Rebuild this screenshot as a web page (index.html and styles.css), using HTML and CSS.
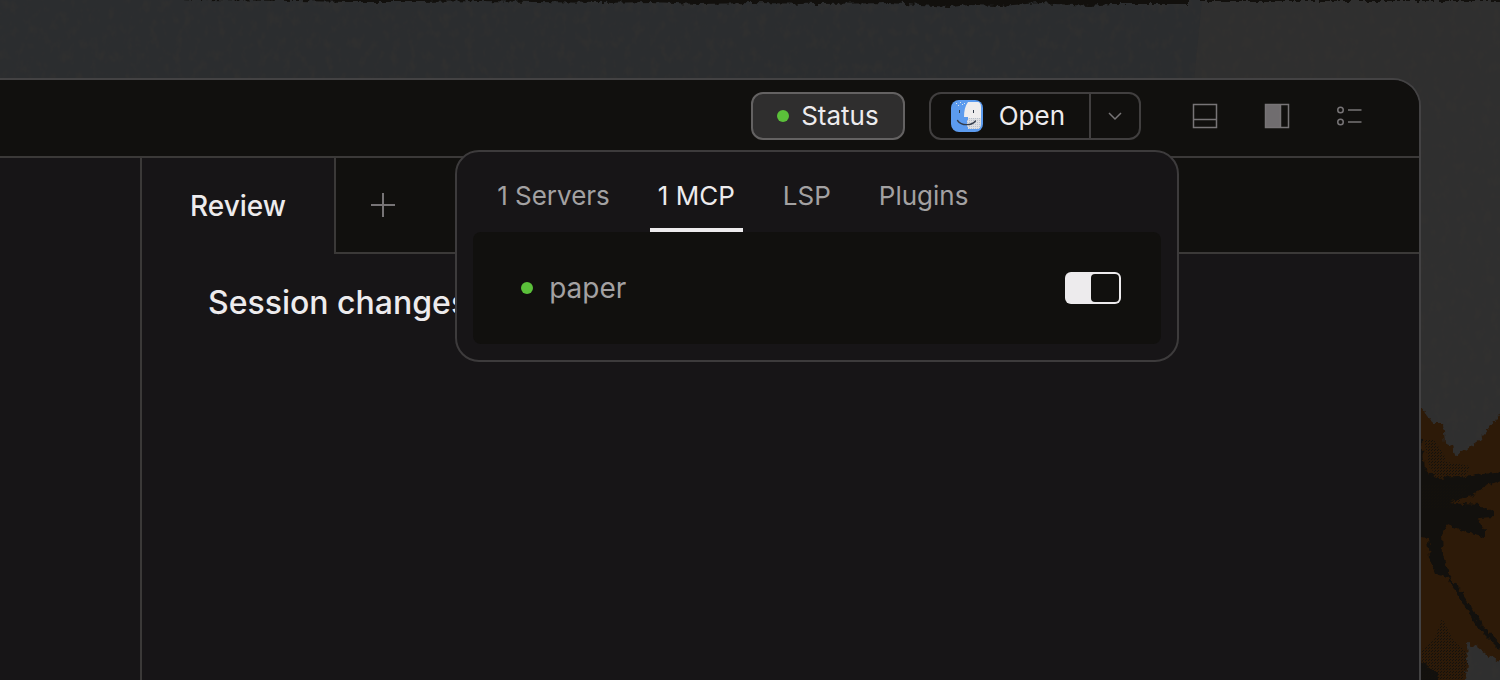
FILE: index.html
```html
<!DOCTYPE html>
<html lang="en">
<head>
  <meta charset="UTF-8" />
  <meta name="viewport" content="width=device-width, initial-scale=1.0"/>
  <title>Session</title>
  <link rel="stylesheet" href="styles.css">
</head>
<body>
  <!-- Desktop wallpaper -->
  <svg class="wallpaper" viewBox="0 0 1500 680" preserveAspectRatio="xMaxYMin slice" aria-hidden="true">
    <defs>
      <filter id="rough" x="-5%" y="-50%" width="110%" height="200%" color-interpolation-filters="sRGB">
        <feTurbulence type="fractalNoise" baseFrequency="0.2" numOctaves="2" seed="4"/>
        <feDisplacementMap in="SourceGraphic" scale="7" xChannelSelector="R" yChannelSelector="G"/>
      </filter>
      <filter id="grain" x="0" y="0" width="100%" height="100%" color-interpolation-filters="sRGB">
        <feTurbulence type="fractalNoise" baseFrequency="0.12 0.08" numOctaves="3" seed="8"/>
        <feColorMatrix values="0 0 0 0 0.21  0 0 0 0 0.2  0 0 0 0 0.19  3 0 0 0 -1.4"/>
      </filter>
      <pattern id="dither" width="3" height="3" patternUnits="userSpaceOnUse">
        <rect width="1" height="1" fill="#14110c"/>
        <rect x="1" y="2" width="1" height="1" fill="#14110c"/>
      </pattern>
    </defs>
    <rect width="1500" height="680" fill="#2b2d2f"/>
    <path d="M1202 0H1500V680H1400V80H1194z" fill="#2f2f2f"/>
    <rect width="1500" height="680" filter="url(#grain)" opacity=".4"/>
    <g filter="url(#rough)" fill="#12100d">
      <path d="M90-6H1189V4H1110L1090 6 1040 3 1000 6 970 5 950 7 890 3 820 4 750 3 700 4 650 2 600 3 540 2 480 1 420 2 350 2 300 1 200 0z"/>
      <path d="M1200-4H1500V1H1200z"/>
    </g>
    <g filter="url(#rough)">
      <path fill="#2d1a08" d="M1410 402L1421 407 1433 423 1443 423 1445 443 1452 447 1455 455 1463 452 1480 440 1492 425 1506 405V662L1490 657 1477 647 1467 643 1468 663 1463 690H1410z"/>
      <path fill="#12100d" d="M1410 440H1422L1425 470 1436 478 1460 477 1483 473 1506 471V480L1488 484 1475 494 1455 500 1447 503 1480 505 1494 512V517L1478 518 1485 530V538L1465 532 1448 524 1442 535 1443 555 1449 575 1470 605 1485 628 1506 650 1500 650 1480 630 1462 602 1448 578 1436 574 1430 558 1428 538 1410 535z"/>
      <path fill="#12100d" d="M1410 655L1426 664 1438 676V690H1410z"/>
    </g>
    <path fill="url(#dither)" d="M1421 650L1434 640 1442 618 1453 640 1465 650 1468 663 1463 680H1421zM1421 485H1470L1455 508H1421zM1436 460L1470 466 1465 478H1430zM1424 440H1434L1446 458 1430 470z"/>
  </svg>

  <div class="window">
    <header class="titlebar">
      <div class="status">
        <button type="button" class="status-btn"><span class="dot"></span>Status</button>

        <div class="popover">
          <div class="tabs" role="tablist">
            <button type="button" class="tab" role="tab">1 Servers</button>
            <button type="button" class="tab active" role="tab" aria-selected="true">1 MCP</button>
            <button type="button" class="tab" role="tab">LSP</button>
            <button type="button" class="tab" role="tab">Plugins</button>
          </div>
          <div class="server">
            <span class="dot"></span>
            <label for="paper">paper</label>
            <input type="checkbox" id="paper" class="switch" checked />
          </div>
        </div>
      </div>

      <div class="open">
        <button type="button" class="open-btn">
          <svg width="32" height="32" viewBox="0 0 32 32" aria-hidden="true">
            <defs>
              <pattern id="shade" width="2" height="2" patternUnits="userSpaceOnUse">
                <rect width="2" height="2" fill="#dedfe2"/>
                <rect width="1" height="1" fill="#b9c0cc"/>
              </pattern>
            </defs>
            <rect width="32" height="32" rx="8" fill="#5c9bee"/>
            <path d="M17 2h9c3 0 4 2 4 5v11H17v-1h-4c0-6 1-11 4-15z" fill="#efedee"/>
            <path d="M17 18h13v5c0 4-1 6-4 6h-9v-2h-1v-7h1z" fill="url(#shade)"/>
            <path d="M5 3.500h1M9 2.500h1M13 3.500h1M7 5.500h1M11 4.500h1" stroke="#d9e2ee"/>
            <path d="M8.500 10v3M22.500 10v3" stroke="#333c4a"/>
            <path d="M6.500 20.500c4 5.500 14 5.500 18 .5" fill="none" stroke="#333c4a" stroke-width="1.300" stroke-linecap="round"/>
          </svg>
          Open
        </button>
        <button type="button" class="caret" aria-label="Open with">
          <svg width="16" height="16" viewBox="0 0 16 16" aria-hidden="true">
            <path d="M2 5l6 6 6-6" fill="none" stroke="#777576" stroke-width="1.500"/>
          </svg>
        </button>
      </div>

      <div class="view-btns">
        <button type="button" class="icon-btn" aria-label="Toggle bottom panel">
          <svg width="26" height="26" viewBox="0 0 26 26" aria-hidden="true">
            <path d="M1.500 1.500h23v23h-23zM1.500 16.500h23" fill="none" stroke="#777476" stroke-width="1.500"/>
          </svg>
        </button>
        <button type="button" class="icon-btn" aria-label="Toggle side panel">
          <svg width="26" height="26" viewBox="0 0 26 26" aria-hidden="true">
            <path d="M1 1h16v24H1z" fill="#706d6f"/>
            <path d="M1.500 1.500h23v23h-23zM16.500 1.500v23" fill="none" stroke="#777476" stroke-width="1.500"/>
          </svg>
        </button>
        <button type="button" class="icon-btn" aria-label="Toggle list">
          <svg width="26" height="26" viewBox="0 0 26 26" aria-hidden="true">
            <g fill="none" stroke="#777476" stroke-width="1.500">
              <circle cx="4.500" cy="7" r="2.750"/>
              <circle cx="4.500" cy="19" r="2.750"/>
              <path d="M12 7H25.500M12 19H25.500"/>
            </g>
          </svg>
        </button>
      </div>
    </header>

    <div class="content">
      <aside class="sidebar"></aside>
      <main class="main">
        <nav class="file-tabs">
          <button type="button" class="file-tab">Review</button>
          <div class="file-tabs-rest">
            <button type="button" class="add-btn" aria-label="New tab">
              <svg width="26" height="26" viewBox="0 0 26 26" aria-hidden="true">
                <path d="M13 1v24M1 13h24" stroke="#777476" stroke-width="2"/>
              </svg>
            </button>
          </div>
        </nav>
        <h1>Session changes</h1>
      </main>
    </div>
  </div>
</body>
</html>
```

FILE: styles.css
```css
* {
  box-sizing: border-box;
}

body {
  margin: 0;
  min-height: 100vh;
  display: flex;
  padding: 78px 79px 0 0;
  background: #2b2d2f;
  font-family: Inter, "Liberation Sans", sans-serif;
  font-size: 26px;
  color: #edebed;
  overflow: hidden;
}

button {
  margin: 0;
  padding: 0;
  border: none;
  background: none;
  color: inherit;
  font: inherit;
  cursor: pointer;
}

svg {
  display: block;
}

.wallpaper {
  position: absolute;
  top: 0;
  left: 0;
  width: 100%;
  height: 100%;
}

.window {
  position: relative;
  flex: 1;
  display: flex;
  flex-direction: column;
  border: 2px solid #434243;
  border-width: 2px 2px 0 0;
  border-top-right-radius: 28px;
  background: #171517;
}

/* Title bar */
.titlebar {
  display: flex;
  align-items: center;
  justify-content: flex-end;
  gap: 24px;
  height: 78px;
  padding: 0 46px 4px 0;
  border-bottom: 2px solid #3b3938;
  border-top-right-radius: 26px;
  background: #11100e;
}

.status {
  position: relative;
}

.status-btn {
  display: flex;
  align-items: center;
  gap: 12px;
  height: 48px;
  padding: 0 24px;
  border: 2px solid #646262;
  border-radius: 12px;
  background: #2f2e2e;
  line-height: 30px;
}

.dot {
  width: 12px;
  height: 12px;
  border-radius: 50%;
  background: #5bc03a;
}

.open {
  display: flex;
  height: 48px;
  border: 2px solid #413f3f;
  border-radius: 12px;
}

.open-btn {
  display: flex;
  align-items: center;
  gap: 16px;
  padding: 0 24px 0 20px;
  line-height: 30px;
}

.caret {
  display: flex;
  align-items: center;
  justify-content: center;
  width: 50px;
  border-left: 2px solid #413f3f;
}

.view-btns {
  display: flex;
  gap: 24px;
  margin-left: 16px;
}

.icon-btn {
  display: flex;
  align-items: center;
  justify-content: center;
  width: 48px;
  height: 48px;
}

/* Status popover */
.popover {
  position: absolute;
  top: 58px;
  left: -296px;
  z-index: 1;
  width: 724px;
  padding: 8px 16px 16px;
  border: 2px solid #3d3b3c;
  border-radius: 24px;
  background: #171517;
}

.tabs {
  display: flex;
  gap: 32px;
  padding: 0 16px;
}

.tab {
  height: 72px;
  padding: 2px 8px 0;
  border-bottom: 4px solid transparent;
  color: #a3a1a2;
}

.tab.active {
  border-bottom-color: #edebed;
  color: #edebed;
}

.server {
  display: flex;
  align-items: center;
  gap: 16px;
  height: 112px;
  padding: 0 40px 0 48px;
  border-radius: 8px;
  background: #11100e;
  font-size: 28px;
  line-height: 36px;
  color: #a3a1a2;
}

.switch {
  appearance: none;
  display: flex;
  width: 56px;
  height: 32px;
  margin: 0 0 0 auto;
  padding: 2px;
  border-radius: 6px;
  background: #edebed;
}

.switch::before {
  content: "";
  width: 28px;
  height: 28px;
  border-radius: 4px;
  background: #11100e;
}

.switch:checked::before {
  margin-left: auto;
}

/* Content */
.content {
  flex: 1;
  display: flex;
}

.sidebar {
  width: 142px;
  border-right: 2px solid #3b3938;
}

.main {
  flex: 1;
}

.file-tabs {
  display: flex;
  height: 96px;
}

.file-tab {
  padding: 0 48px;
  font-size: 28px;
  font-weight: 500;
}

.file-tabs-rest {
  flex: 1;
  display: flex;
  align-items: center;
  padding-left: 34px;
  border-left: 2px solid #3b3938;
  border-bottom: 2px solid #3b3938;
  background: #11100e;
}

h1 {
  margin: 0;
  padding: 28px 66px;
  font-size: 32px;
  font-weight: 500;
  line-height: 42px;
}
```
